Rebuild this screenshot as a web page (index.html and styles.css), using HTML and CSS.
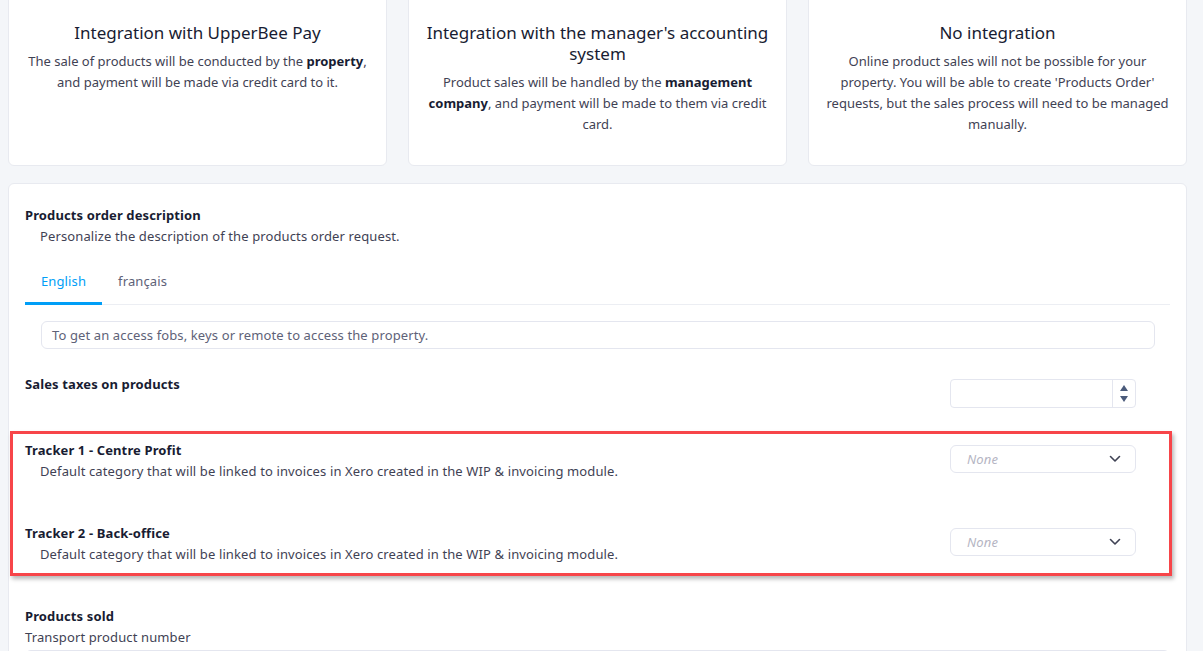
FILE: index.html
```html
<!DOCTYPE html>
<html lang="en">
  <head>
    <meta charset="UTF-8" />
    <meta name="viewport" content="width=device-width, initial-scale=1.0" />
    <title>Products settings</title>
    <link rel="stylesheet" href="styles.css">
  </head>
  <body>
    <div class="page">
      <div class="options">
        <div class="option">
          <h2>Integration with UpperBee Pay</h2>
          <p>The sale of products will be conducted by the <b>property</b>, and payment will be made via credit card to it.</p>
        </div>
        <div class="option">
          <h2>Integration with the manager's accounting system</h2>
          <p>Product sales will be handled by the <b>management company</b>, and payment will be made to them via credit card.</p>
        </div>
        <div class="option">
          <h2>No integration</h2>
          <p>Online product sales will not be possible for your property. You will be able to create 'Products Order' requests, but the sales process will need to be managed manually.</p>
        </div>
      </div>

      <div class="panel">
        <div class="field">
          <h3>Products order description</h3>
          <p class="hint">Personalize the description of the products order request.</p>
        </div>

        <div class="tabs">
          <a class="tab active">English</a>
          <a class="tab">français</a>
        </div>
        <div class="text-input">To get an access fobs, keys or remote to access the property.</div>

        <div class="row taxes">
          <div class="field">
            <h3>Sales taxes on products</h3>
          </div>
          <div class="number-input">
            <span class="value"></span>
            <span class="spin">
              <i class="up"></i>
              <i class="down"></i>
            </span>
          </div>
        </div>

        <div class="highlight">
          <div class="row">
            <div class="field">
              <h3>Tracker 1 - Centre Profit</h3>
              <p class="hint">Default category that will be linked to invoices in Xero created in the WIP &amp; invoicing module.</p>
            </div>
            <div class="select">
              <span>None</span>
              <svg width="12" height="8" viewBox="0 0 12 8"><path d="M1.5 1.5 L6 6 L10.5 1.5" fill="none" stroke="#3f4254" stroke-width="1.6" stroke-linecap="round" stroke-linejoin="round"/></svg>
            </div>
          </div>
          <div class="row">
            <div class="field">
              <h3>Tracker 2 - Back-office</h3>
              <p class="hint">Default category that will be linked to invoices in Xero created in the WIP &amp; invoicing module.</p>
            </div>
            <div class="select">
              <span>None</span>
              <svg width="12" height="8" viewBox="0 0 12 8"><path d="M1.5 1.5 L6 6 L10.5 1.5" fill="none" stroke="#3f4254" stroke-width="1.6" stroke-linecap="round" stroke-linejoin="round"/></svg>
            </div>
          </div>
        </div>

        <div class="field sold">
          <h3>Products sold</h3>
          <p class="label">Transport product number</p>
        </div>
        <div class="wide-input"></div>
      </div>
    </div>
  </body>
</html>
```

FILE: styles.css
```css
*{
    margin: 0px;
    padding: 0px;
    box-sizing: border-box;
}
body{
    background-color: #f4f6f9;
    font-family: "Noto Sans", "Open Sans", sans-serif;
    font-size: 13px;
    letter-spacing: 0.12px;
    line-height: 21px;
    color: #181c32;
    overflow: hidden;
}
.page{
    padding: 0 16px 0 8px;
}
.options{
    display: grid;
    grid-template-columns: repeat(3, 1fr);
    gap: 21px;
    margin-top: -8px;
}
.option{
    background-color: white;
    border: 1px solid #e8eaf0;
    border-radius: 6px;
    padding: 29px 14px 30px;
    text-align: center;
    letter-spacing: 0;
}
.option h2{
    font-size: 17px;
    font-weight: 400;
    line-height: 21px;
    margin-bottom: 8px;
}
.option p{
    color: #3f4254;
}
.option b{
    color: #181c32;
}
.panel{
    margin-top: 17px;
    background-color: white;
    border: 1px solid #e8eaf0;
    border-radius: 6px;
    padding: 21px 16px 0;
    height: 700px;
}
.field h3{
    font-size: 13px;
    font-weight: 700;
    line-height: 21px;
}
.hint{
    padding-left: 15px;
    color: #3f4254;
}
.tabs{
    display: flex;
    margin-top: 12px;
    border-bottom: 1px solid #eceef3;
}
.tab{
    padding: 12px 16px 10px;
    color: #5e6278;
    border-bottom: 3px solid transparent;
    margin-bottom: -1px;
}
.tab.active{
    color: #009ef7;
    border-bottom-color: #009ef7;
}
.text-input{
    margin: 16px 15px 0 16px;
    height: 28px;
    border: 1px solid #e4e6ef;
    border-radius: 6px;
    padding: 3px 10px;
    color: #5e6278;
}
.row{
    display: flex;
    justify-content: space-between;
    align-items: flex-start;
}
.taxes{
    margin-top: 25px;
}
.number-input{
    display: flex;
    width: 186px;
    height: 29px;
    margin: 5px 34px 0 0;
    border: 1px solid #e4e6ef;
    border-radius: 4px;
}
.number-input .value{
    flex: 1;
}
.spin{
    width: 23px;
    border-left: 1px solid #e4e6ef;
    display: flex;
    flex-direction: column;
    align-items: center;
    justify-content: center;
    gap: 5px;
}
.spin i{
    width: 0;
    height: 0;
    border-left: 4px solid transparent;
    border-right: 4px solid transparent;
}
.spin .up{
    border-bottom: 6px solid #4b5b7b;
}
.spin .down{
    border-top: 6px solid #4b5b7b;
}
.highlight{
    margin: 23px -2px 0 -15px;
    padding: 6px 0 8px 12px;
    border: 3px solid #f74549;
    box-shadow: 2px 3px 4px rgba(0, 0, 0, 0.28);
}
.highlight .row + .row{
    margin-top: 41px;
}
.select{
    display: flex;
    align-items: center;
    justify-content: space-between;
    width: 186px;
    height: 28px;
    margin: 5px 33px 0 0;
    padding: 0 14px 0 16px;
    border: 1px solid #e4e6ef;
    border-radius: 6px;
    color: #b5b5c3;
    font-style: italic;
}
.sold{
    margin-top: 30px;
}
.label{
    color: #3f4254;
}
.wide-input{
    margin-top: 2px;
    height: 30px;
    border: 1px solid #e4e6ef;
    border-radius: 6px;
}
```
